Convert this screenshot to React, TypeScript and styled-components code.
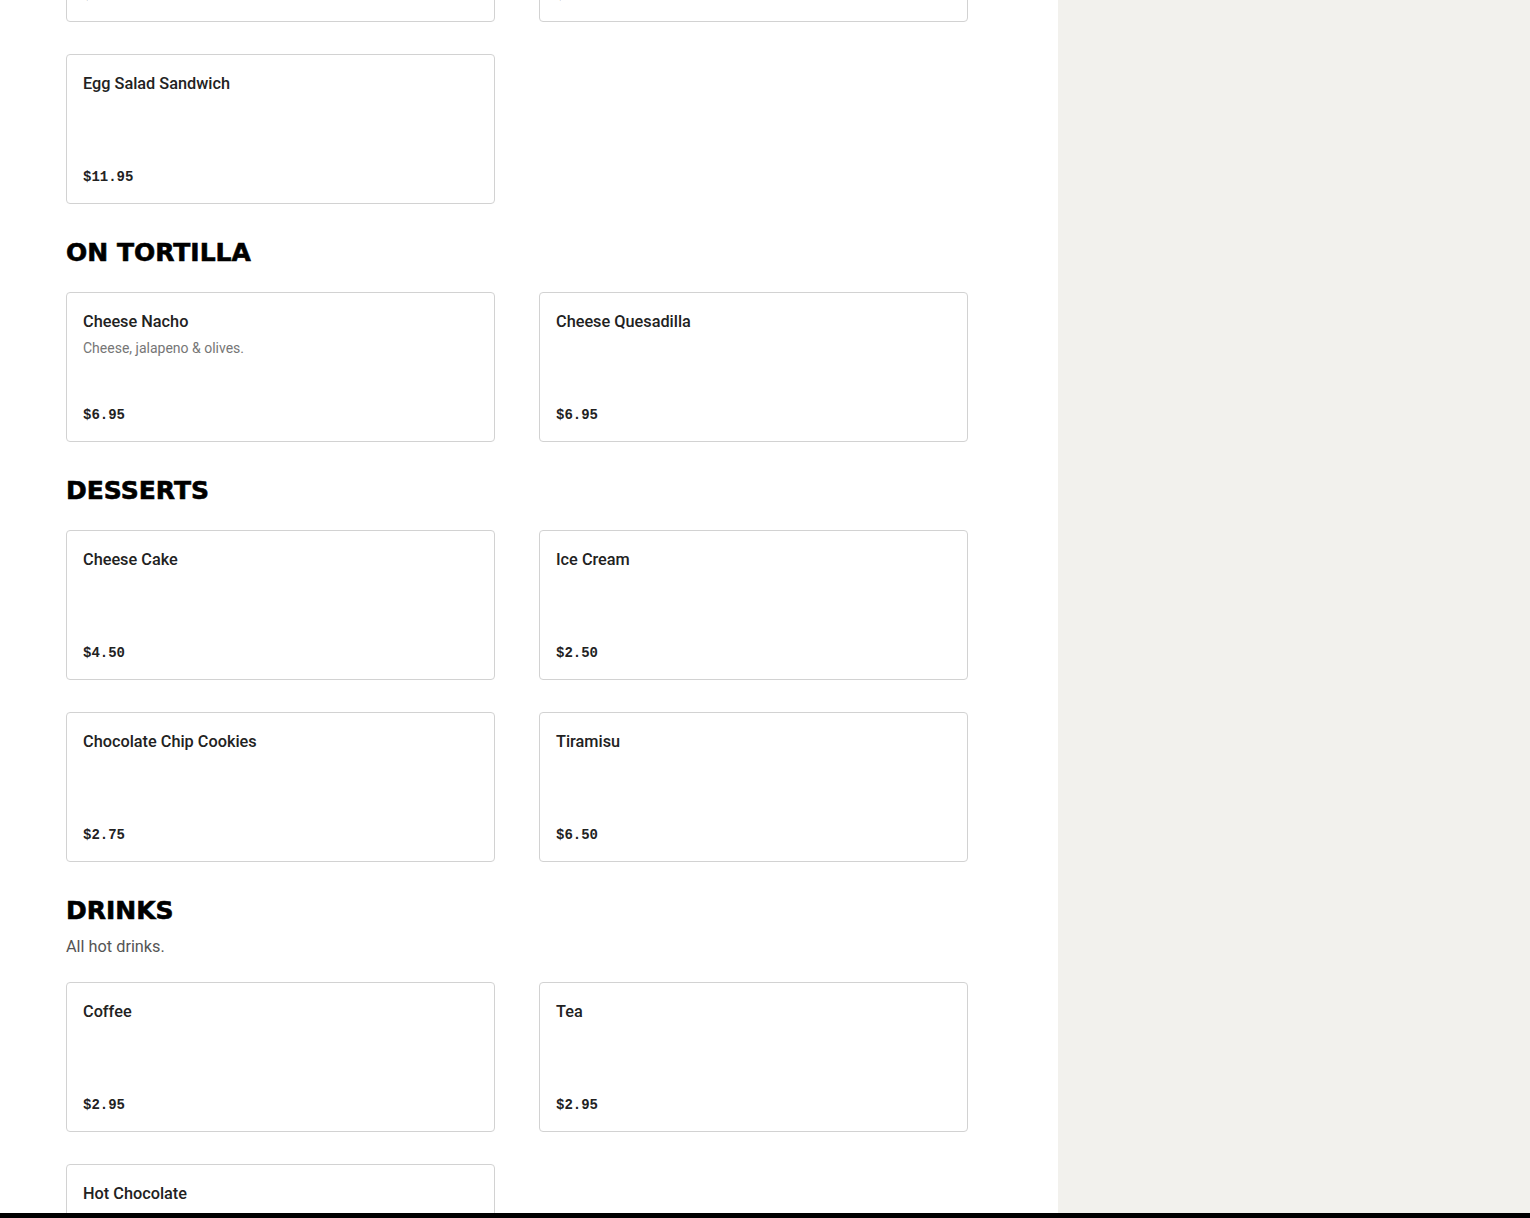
import * as React from 'react';
import styled, { createGlobalStyle } from 'styled-components';

const GlobalStyle = createGlobalStyle`
  html, body {
    margin: 0;
    padding: 0;
    background: #ffffff;
  }
  body {
    font-family: Roboto, 'Liberation Sans', Arial, sans-serif;
    color: #1f1f1f;
  }
`;

const Page = styled.div`
  display: flex;
  min-height: 100vh;
`;

const Main = styled.main`
  width: 1058px;
  flex: none;
  box-sizing: border-box;
  padding: 0 90px 40px 66px;
  background: #ffffff;
`;

const Aside = styled.aside`
  flex: 1;
  background: #f2f1ed;
`;

// the page is scrolled: the first row of cards is cut off at the top
const Scrolled = styled.div`
  margin-top: -128px;
  display: flex;
  flex-direction: column;
  gap: 32px;
`;

const Section = styled.section`
  display: flex;
  flex-direction: column;
`;

const Heading = styled.h2`
  margin: 0 0 23px;
  padding-top: 1px;
  font-family: 'DejaVu Sans', 'Liberation Sans', sans-serif;
  font-weight: 700;
  font-size: 25px;
  line-height: 32px;
  color: #000000;
  text-transform: uppercase;
  -webkit-text-stroke: 0.6px #000000;
`;

const SectionDesc = styled.p`
  margin: -15px 0 23px;
  font-size: 16.3px;
  line-height: 24px;
  color: #555555;
`;

const Grid = styled.div`
  display: grid;
  grid-template-columns: 429px 429px;
  column-gap: 44px;
  row-gap: 32px;
`;

const Card = styled.div`
  box-sizing: border-box;
  height: 150px;
  padding: 17px 16px 16px;
  border: 1px solid #d2d2d2;
  border-radius: 4px;
  display: flex;
  flex-direction: column;
  justify-content: space-between;
  background: #ffffff;
`;

const ItemName = styled.div`
  font-size: 16.3px;
  line-height: 24px;
  font-weight: 500;
  color: #222222;
`;

const ItemDesc = styled.div`
  margin-top: 4px;
  font-size: 14px;
  line-height: 20px;
  color: #767676;
`;

const Price = styled.div`
  font-family: 'Liberation Mono', 'DejaVu Sans Mono', monospace;
  font-weight: 700;
  font-size: 14px;
  line-height: 20px;
  color: #222222;
`;

const BottomBar = styled.div`
  position: fixed;
  left: 0;
  right: 0;
  bottom: 0;
  height: 5px;
  background: #000000;
`;

interface Item {
  name: string;
  desc?: string;
  price: string;
}

interface MenuSection {
  title?: string;
  desc?: string;
  items: Item[];
}

const sections: MenuSection[] = [
  {
    items: [
      { name: 'Tuna Sandwich', price: '$11.95' },
      { name: 'Chicken Sandwich', price: '$12.95' },
      { name: 'Egg Salad Sandwich', price: '$11.95' },
    ],
  },
  {
    title: 'On Tortilla',
    items: [
      { name: 'Cheese Nacho', desc: 'Cheese, jalapeno & olives.', price: '$6.95' },
      { name: 'Cheese Quesadilla', price: '$6.95' },
    ],
  },
  {
    title: 'Desserts',
    items: [
      { name: 'Cheese Cake', price: '$4.50' },
      { name: 'Ice Cream', price: '$2.50' },
      { name: 'Chocolate Chip Cookies', price: '$2.75' },
      { name: 'Tiramisu', price: '$6.50' },
    ],
  },
  {
    title: 'Drinks',
    desc: 'All hot drinks.',
    items: [
      { name: 'Coffee', price: '$2.95' },
      { name: 'Tea', price: '$2.95' },
      { name: 'Hot Chocolate', price: '$3.50' },
    ],
  },
];

function MenuCard({ item }: { item: Item }) {
  return (
    <Card>
      <div>
        <ItemName>{item.name}</ItemName>
        {item.desc && <ItemDesc>{item.desc}</ItemDesc>}
      </div>
      <Price>{item.price}</Price>
    </Card>
  );
}

export default function App() {
  return (
    <>
      <GlobalStyle />
      <Page>
        <Main>
          <Scrolled>
            {sections.map((s, i) => (
              <Section key={i}>
                {s.title && <Heading>{s.title}</Heading>}
                {s.desc && <SectionDesc>{s.desc}</SectionDesc>}
                <Grid>
                  {s.items.map((item) => (
                    <MenuCard key={item.name} item={item} />
                  ))}
                </Grid>
              </Section>
            ))}
          </Scrolled>
        </Main>
        <Aside />
      </Page>
      <BottomBar />
    </>
  );
}
